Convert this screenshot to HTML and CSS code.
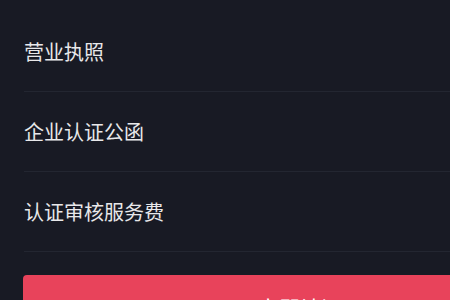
FILE: index.html
```html
<!DOCTYPE html>
<html lang="zh-CN">
<head>
<meta charset="utf-8">
<title>认证材料</title>
<link rel="stylesheet" href="styles.css">
</head>
<body>
<div class="page">
  <ul class="list">
    <li class="row">营业执照</li>
    <li class="row">企业认证公函</li>
    <li class="row">认证审核服务费</li>
  </ul>
  <div class="action">
    <button class="btn">立即认证</button>
  </div>
</div>
</body>
</html>
```
FILE: styles.css
```css
html, body {
  margin: 0;
  padding: 0;
  background: #181a24;
  overflow: hidden;
}
.page {
  width: 450px;
  height: 300px;
  overflow: hidden;
  padding-top: 12px;
  box-sizing: border-box;
  font-family: "Noto Sans CJK SC", "Noto Sans", sans-serif;
}
.list {
  list-style: none;
  margin: 0 0 0 24px;
  padding: 0;
}
.row {
  height: 80px;
  display: flex;
  align-items: center;
  border-bottom: 1px solid #232631;
  box-sizing: border-box;
  color: #e8e8ea;
  font-size: 20px;
  padding-bottom: 1px;
}
.action {
  margin: 23px 0 0 23px;
}
.btn {
  display: block;
  width: 554px;
  height: 64px;
  border: 0;
  border-radius: 4px;
  background: #e8435b;
  color: #ffffff;
  font-family: "Noto Sans CJK SC", "Noto Sans", sans-serif;
  font-size: 21px;
  padding: 0;
}
```
